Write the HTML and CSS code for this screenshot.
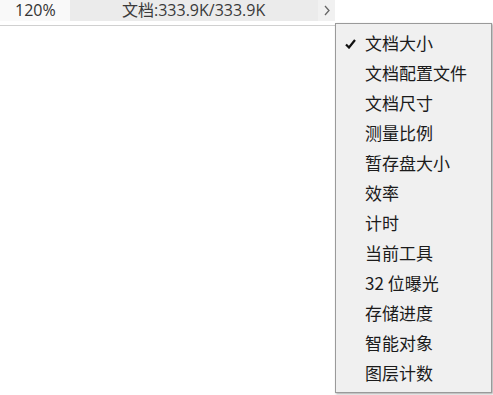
FILE: index.html
```html
<!DOCTYPE html>
<html lang="zh-CN">

<head>
    <meta charset="UTF-8">
    <meta name="viewport" content="width=device-width, initial-scale=1.0">
    <title>状态栏</title>
    <link rel="stylesheet" href="styles.css">
</head>

<body>
    <div class="statusbar">
        <div class="zoom">120%</div>
        <div class="docinfo">文档:333.9K/333.9K</div>
        <div class="more">
            <svg width="6" height="11" viewBox="0 0 6 11">
                <path d="M1 1 L5 5.5 L1 10" fill="none" stroke="#666" stroke-width="1.3"/>
            </svg>
        </div>
    </div>
    <div class="divider"></div>

    <ul class="menu">
        <li class="checked">
            <svg class="check" width="11" height="10" viewBox="0 0 11 10">
                <path d="M1 5.5 L4 8.5 L10 1" fill="none" stroke="#111" stroke-width="2.2"/>
            </svg>
            文档大小
        </li>
        <li>文档配置文件</li>
        <li>文档尺寸</li>
        <li>测量比例</li>
        <li>暂存盘大小</li>
        <li>效率</li>
        <li>计时</li>
        <li>当前工具</li>
        <li>32 位曝光</li>
        <li>存储进度</li>
        <li>智能对象</li>
        <li>图层计数</li>
    </ul>
</body>

</html>
```

FILE: styles.css
```css
body {
    margin: 0;
    background-color: #fff;
    font-family: "Open Sans", "Noto Sans CJK SC", sans-serif;
    color: #333;
}

.statusbar {
    display: flex;
    align-items: stretch;
    width: 335px;
    height: 21px;
    background-color: #ebebeb;
    font-size: 16px;
    line-height: 21px;
}

.zoom {
    width: 55px;
    padding-left: 15px;
    background-color: #f9f9f9;
}

.docinfo {
    flex: 1;
    padding-left: 52px;
    color: #3a3a3a;
}

.more {
    display: flex;
    align-items: center;
    justify-content: center;
    width: 17px;
    background-color: #f1f1f1;
}

.divider {
    width: 335px;
    height: 1px;
    margin-top: 4px;
    background-color: #d0d0d0;
}

.menu {
    position: absolute;
    left: 335px;
    top: 23px;
    width: 155px;
    margin: 0;
    padding: 4px 0;
    list-style: none;
    background-color: #f0f0f0;
    border: 1px solid #9a9a9a;
    box-shadow: 1px 1px 2px rgba(0, 0, 0, 0.35);
    font-family: "Noto Sans CJK SC", sans-serif;
    font-size: 17px;
    color: #1b1b1b;
}

.menu li {
    position: relative;
    height: 30px;
    line-height: 30px;
    padding-left: 29px;
}

.check {
    position: absolute;
    left: 9px;
    top: 11px;
}
```
